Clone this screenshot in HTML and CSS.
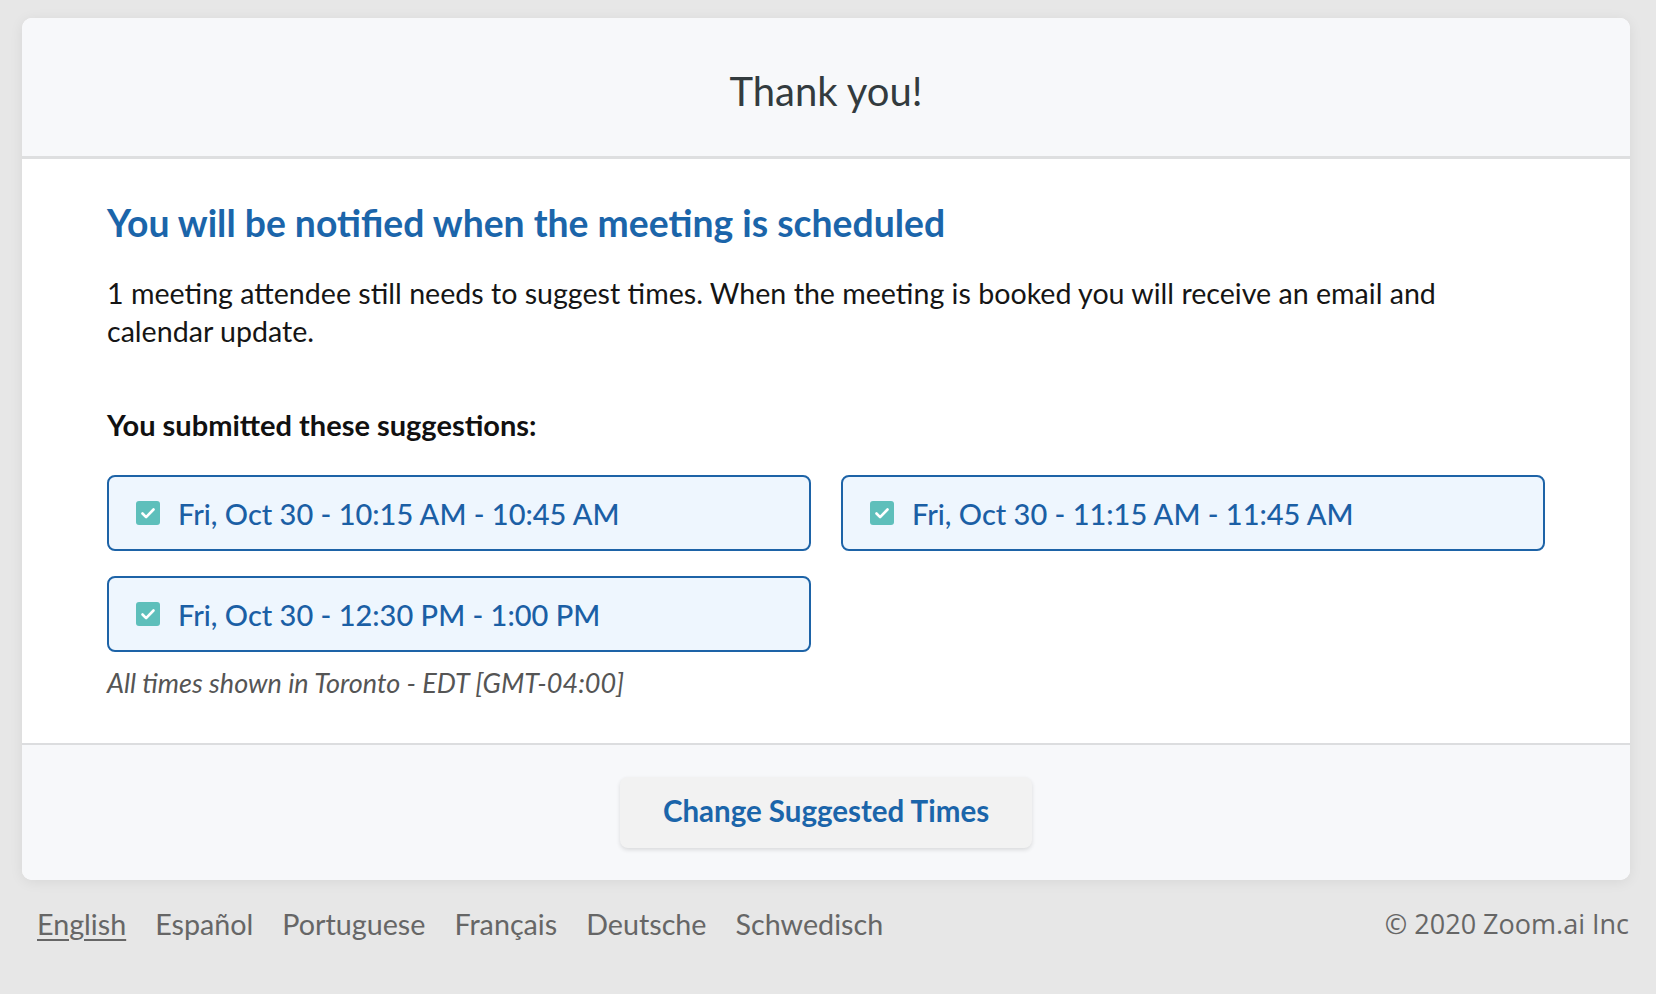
FILE: index.html
```html
<!DOCTYPE html>
<html lang="en">
<head>
<meta charset="utf-8">
<title>Thank you!</title>
<link rel="stylesheet" href="styles.css">
</head>
<body>
<main class="card">
  <header class="card-header">
    <h1 class="title">Thank you!</h1>
  </header>
  <section class="card-body">
    <h2 class="headline">You will be notified when the meeting is scheduled</h2>
    <p class="intro">1 meeting attendee still needs to suggest times. When the meeting is booked you will receive an email and calendar update.</p>
    <h3 class="label">You submitted these suggestions:</h3>
    <div class="slots">
      <div class="slot">
        <span class="check"><svg viewBox="0 0 24 24" width="24" height="24"><rect width="24" height="24" rx="3" fill="#5ebfbb"/><path d="M6.5 12.5l3.6 3.6 7.4-7.6" fill="none" stroke="#fff" stroke-width="2.6" stroke-linecap="round" stroke-linejoin="round"/></svg></span>
        <span class="slot-text">Fri, Oct 30 - 10:15 AM - 10:45 AM</span>
      </div>
      <div class="slot">
        <span class="check"><svg viewBox="0 0 24 24" width="24" height="24"><rect width="24" height="24" rx="3" fill="#5ebfbb"/><path d="M6.5 12.5l3.6 3.6 7.4-7.6" fill="none" stroke="#fff" stroke-width="2.6" stroke-linecap="round" stroke-linejoin="round"/></svg></span>
        <span class="slot-text">Fri, Oct 30 - 11:15 AM - 11:45 AM</span>
      </div>
      <div class="slot">
        <span class="check"><svg viewBox="0 0 24 24" width="24" height="24"><rect width="24" height="24" rx="3" fill="#5ebfbb"/><path d="M6.5 12.5l3.6 3.6 7.4-7.6" fill="none" stroke="#fff" stroke-width="2.6" stroke-linecap="round" stroke-linejoin="round"/></svg></span>
        <span class="slot-text">Fri, Oct 30 - 12:30 PM - 1:00 PM</span>
      </div>
    </div>
    <p class="note">All times shown in Toronto - EDT [GMT-04:00]</p>
  </section>
  <footer class="card-footer">
    <button class="btn" type="button">Change Suggested Times</button>
  </footer>
</main>
<nav class="page-footer">
  <ul class="langs">
    <li><a class="lang active" href="#">English</a></li>
    <li><a class="lang" href="#">Español</a></li>
    <li><a class="lang" href="#">Portuguese</a></li>
    <li><a class="lang" href="#">Français</a></li>
    <li><a class="lang" href="#">Deutsche</a></li>
    <li><a class="lang" href="#">Schwedisch</a></li>
  </ul>
  <div class="copyright">© 2020 Zoom.ai Inc</div>
</nav>
</body>
</html>
```

FILE: styles.css
```css
html, body {
  margin: 0;
  padding: 0;
}
body {
  background: #e7e7e7;
  font-family: "Lato", "Noto Sans", sans-serif;
  color: #111;
  min-height: 994px;
}
.card {
  margin: 18px 26px 0 22px;
  background: #fff;
  border-radius: 10px;
  overflow: hidden;
  box-shadow: 0 2px 14px rgba(0, 0, 0, 0.07);
}
.card-header {
  height: 141px;
  box-sizing: border-box;
  padding-top: 8px;
  display: flex;
  align-items: center;
  justify-content: center;
  background: #f7f8fa;
  border-bottom: 3px solid #dedfe0;
}
.title {
  margin: 0;
  font-size: 40px;
  font-weight: 400;
  color: #333b3e;
}
.card-body {
  padding: 42px 84px 44px 85px;
}
.headline {
  margin: 0;
  font-size: 37.3px;
  line-height: 44px;
  font-weight: 700;
  color: #1b65aa;
}
.intro {
  margin: 29px 0 0;
  font-size: 28.6px;
  line-height: 38px;
  color: #151515;
}
.label {
  margin: 57px 0 0;
  font-size: 29px;
  line-height: 36px;
  font-weight: 700;
  color: #111;
}
.slots {
  margin-top: 32px;
  display: grid;
  grid-template-columns: 704px 704px;
  column-gap: 30px;
  row-gap: 25px;
}
.slot {
  height: 76px;
  box-sizing: border-box;
  display: flex;
  align-items: center;
  padding-left: 27px;
  border: 2px solid #1d63a7;
  border-radius: 8px;
  background: #eef6fe;
}
.check {
  display: flex;
  width: 24px;
  height: 24px;
}
.slot-text {
  margin-left: 18px;
  font-size: 29px;
  font-weight: 500;
  color: #1b5fa5;
}
.note {
  margin: 15px 0 0;
  font-size: 27px;
  line-height: 32px;
  font-style: italic;
  color: #555;
}
.card-footer {
  border-top: 2px solid #dcdddf;
  background: #f7f8fa;
  display: flex;
  justify-content: center;
  padding: 32px 0 32px;
}
.btn {
  width: 412px;
  height: 71px;
  padding: 0 0 4px;
  border: none;
  border-radius: 8px;
  background: #f2f2f2;
  box-shadow: 0 2px 4px rgba(0, 0, 0, 0.12);
  font-family: "Lato", "Noto Sans", sans-serif;
  font-size: 29.5px;
  font-weight: 700;
  color: #1b65aa;
  cursor: pointer;
}
.page-footer {
  display: flex;
  justify-content: space-between;
  align-items: center;
  margin: 25px 27px 0 37px;
}
.langs {
  display: flex;
  gap: 29px;
  list-style: none;
  margin: 0;
  padding: 0;
}
.lang {
  font-size: 28.7px;
  color: #666;
  text-decoration: none;
}
.lang.active {
  text-decoration: underline;
  text-underline-offset: 4px;
}
.copyright {
  font-family: "Open Sans", "Noto Sans", sans-serif;
  font-size: 27px;
  color: #666;
}
```
